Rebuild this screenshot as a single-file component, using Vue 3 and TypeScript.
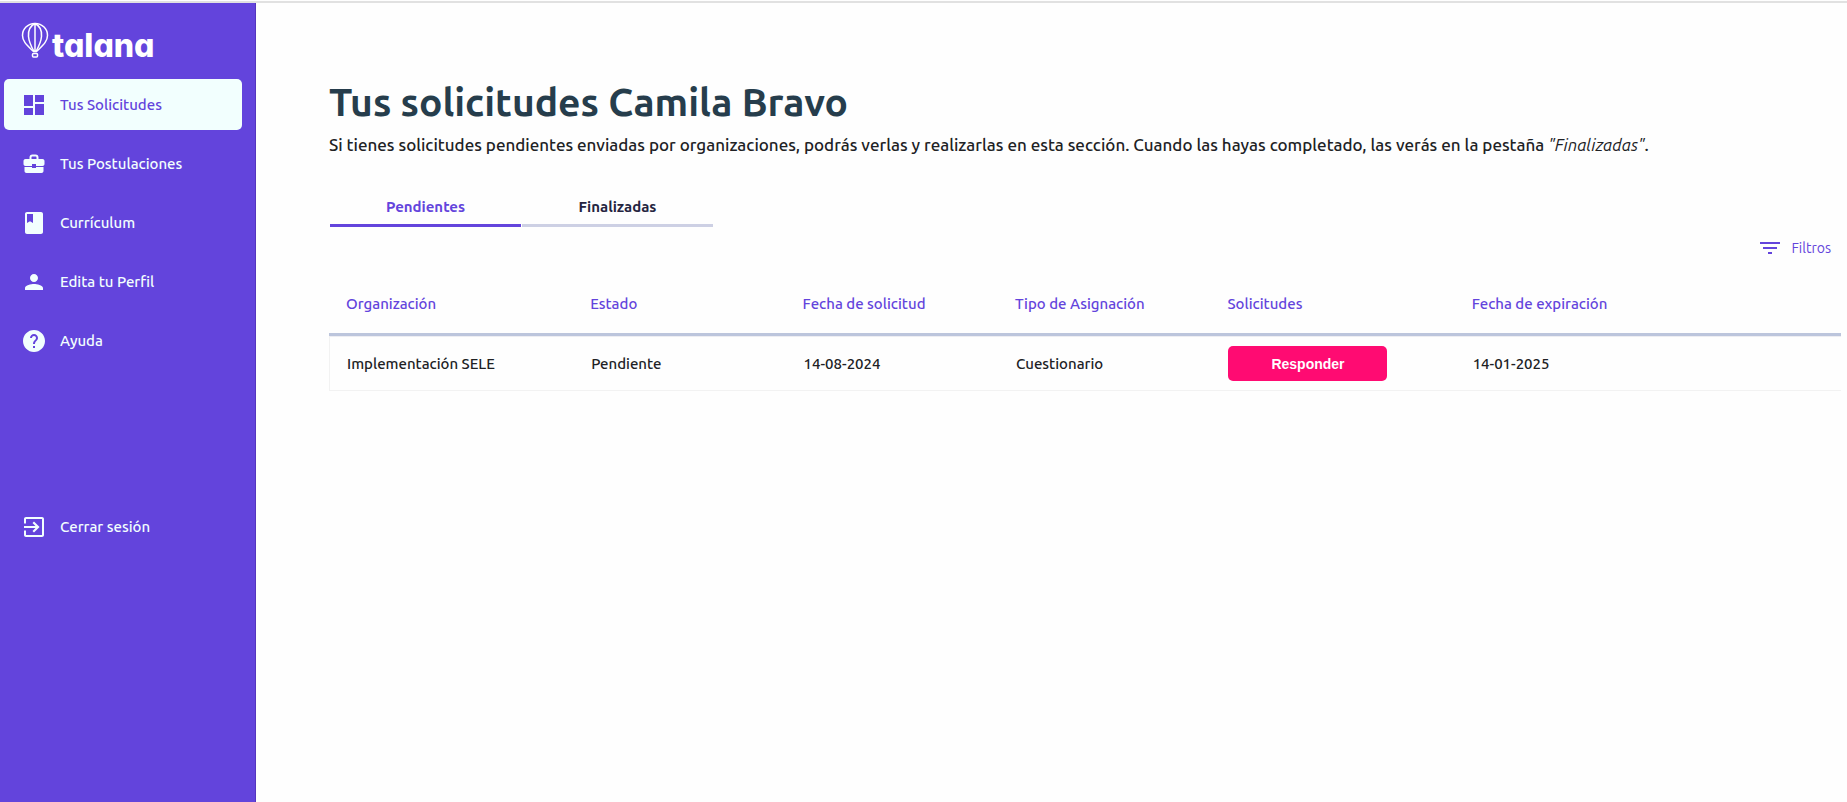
<script setup lang="ts">
import { ref } from 'vue'

const menu = [
  { label: 'Tus Solicitudes', icon: 'M2 13h9V2H2v11zm0 9h9v-7H2v7zm11 0h9V11h-9v11zm0-20v7h9V2h-9z' },
  { label: 'Tus Postulaciones', icon: 'M10 16v-1H2.500v4c0 1.110.890 2 2 2h15c1.110 0 2-.890 2-2v-4H14v1h-4zm10.500-9H16.500V5.500C16.500 3.500 15.500 2.500 13.500 2.500h-3C8.500 2.500 7.500 3.500 7.500 5.500V7h-4c-1.100 0-2 .9-2 2v3c0 1.110.890 2 2 2H10v-2h4v2h6.500c1.100 0 2-.9 2-2V9c0-1.100-.9-2-2-2zm-6 0h-5V5.500c0-.7.300-1 1-1h3c.7 0 1 .3 1 1V7z' },
  { label: 'Currículum', icon: 'M19 1H5c-1.100 0-2 .9-2 2v18c0 1.100.9 2 2 2h14c1.100 0 2-.9 2-2V3c0-1.100-.9-2-2-2zM5 3h6v9l-3-1.800L5 12V3z' },
  { label: 'Edita tu Perfil', icon: 'M12 12c2.210 0 4-1.790 4-4s-1.790-4-4-4-4 1.790-4 4 1.790 4 4 4zm0 2c-2.670 0-9 1.340-9 4v2h18v-2c0-2.660-6.330-4-9-4z' },
  { label: 'Ayuda', icon: 'M12 1C5.930 1 1 5.930 1 12s4.930 11 11 11 11-4.930 11-11S18.070 1 12 1zm1 18h-2v-2h2v2zm2.070-7.750l-.9.920C13.450 12.900 13 13.500 13 15h-2v-.5c0-1.100.450-2.100 1.170-2.830l1.240-1.260c.370-.360.590-.860.590-1.410 0-1.100-.9-2-2-2s-2 .9-2 2H8c0-2.210 1.790-4 4-4s4 1.790 4 4c0 .880-.360 1.680-.930 2.250z' },
]
const logout = 'M10.500 16.100L12 17.600l5.600-5.600L12 6.400l-1.500 1.500 3 3H2v2.100h11.500l-3 3.100zM20 2H4c-1.110 0-2 .9-2 2v4.500h2V4h16v16H4v-4.500H2V20c0 1.100.890 2 2 2h16c1.100 0 2-.9 2-2V4c0-1.100-.9-2-2-2z'

const tabs = ['Pendientes', 'Finalizadas']
const activeTab = ref('Pendientes')

const columns = ['Organización', 'Estado', 'Fecha de solicitud', 'Tipo de Asignación', 'Solicitudes', 'Fecha de expiración']
const requests = [
  { org: 'Implementación SELE', status: 'Pendiente', requested: '14-08-2024', kind: 'Cuestionario', expires: '14-01-2025' },
]
</script>

<template>
  <div class="page">
    <nav class="sidebar" aria-label="Principal">
      <a href="#" class="brand" aria-label="talana">
        <svg class="balloon" viewBox="0 0 28 36" aria-hidden="true">
          <g fill="none" stroke="#fff" stroke-width="1.500">
            <path d="M14 1.500C6.500 1.500 1.500 7 1.500 13.500C1.500 20 7 24 12.500 29.500h3C21 24 26.500 20 26.500 13.500C26.500 7 21.500 1.500 14 1.500z" />
            <path d="M14 1.500C9 4 7 9 7.500 14.500C8 20 10.500 25 13 29.500M14 1.500C19 4 21 9 20.500 14.500C20 20 17.500 25 15 29.500M14 1.500V29" />
            <rect x="11.500" y="31.500" width="5" height="3.500" rx="1" />
          </g>
        </svg>
        <span class="wordmark">talana</span>
      </a>
      <ul class="menu">
        <li v-for="(item, i) in menu" :key="item.label">
          <a href="#" class="item" :class="{ active: i === 0 }">
            <svg viewBox="0 0 24 24" aria-hidden="true"><path :d="item.icon" /></svg>
            <span>{{ item.label }}</span>
          </a>
        </li>
      </ul>
      <button type="button" class="item logout">
        <svg viewBox="0 0 24 24" aria-hidden="true"><path :d="logout" /></svg>
        <span>Cerrar sesión</span>
      </button>
    </nav>

    <main class="content">
      <h1>Tus solicitudes Camila Bravo</h1>
      <p class="intro">
        Si tienes solicitudes pendientes enviadas por organizaciones, podrás verlas y realizarlas en esta sección. Cuando las hayas completado, las verás en la pestaña <em>"Finalizadas"</em>.
      </p>
      <div class="tabs" role="tablist">
        <button
          v-for="tab in tabs" :key="tab" type="button" role="tab" class="tab"
          :class="{ selected: tab === activeTab }" :aria-selected="tab === activeTab"
          @click="activeTab = tab"
        >{{ tab }}</button>
      </div>
      <div class="toolbar">
        <button type="button" class="filter">
          <svg viewBox="0 0 24 24" aria-hidden="true"><path d="M10 18h4v-2h-4v2zM2 6v2h20V6H2zm3 7h14v-2H5v2z" /></svg>
          <span>Filtros</span>
        </button>
      </div>
      <table class="requests">
        <colgroup>
          <col class="wide"><col class="mid"><col class="mid"><col class="mid"><col class="wide"><col>
        </colgroup>
        <thead>
          <tr><th v-for="c in columns" :key="c" scope="col">{{ c }}</th></tr>
        </thead>
        <tbody>
          <tr v-for="r in requests" :key="r.org">
            <td>{{ r.org }}</td>
            <td>{{ r.status }}</td>
            <td>{{ r.requested }}</td>
            <td>{{ r.kind }}</td>
            <td><button type="button" class="answer">Responder</button></td>
            <td>{{ r.expires }}</td>
          </tr>
        </tbody>
      </table>
    </main>
  </div>
</template>

<style>
body {
  margin: 0;
  background: #fefefe;
}
</style>

<style scoped>
.page {
  display: flex;
  min-height: calc(100vh - 1px);
  margin-top: 1px;
  box-sizing: border-box;
  border-top: 2px solid #e1e1e1;
  background: #fefefe;
  color: #202124;
  font: 500 15px/20px Ubuntu, "Noto Sans", sans-serif;
}
button {
  font: inherit;
  color: inherit;
  background: none;
  border: 0;
  padding: 0;
  cursor: pointer;
}
a {
  color: inherit;
  text-decoration: none;
}

.sidebar {
  flex: none;
  width: 256px;
  box-sizing: border-box;
  border-right: 1px solid #5535be;
  background: #6344dc;
  color: #f2fffe;
}
.brand {
  display: flex;
  align-items: flex-end;
  gap: 3px;
  height: 55px;
  padding: 0 21px;
  box-sizing: border-box;
  color: #fff;
}
.balloon {
  width: 28px;
  height: 36px;
}
.wordmark {
  font: 800 32px/24px Inter, sans-serif;
  font-feature-settings: "cv11";
}
.menu {
  list-style: none;
  margin: 21px 0 0;
  padding: 0;
  display: grid;
  gap: 8px;
}
.item {
  display: flex;
  align-items: center;
  gap: 14px;
  width: 238px;
  height: 51px;
  margin: 0 4px;
  padding: 0 18px;
  box-sizing: border-box;
  border-radius: 5px;
  text-align: left;
}
.item svg {
  width: 24px;
  height: 24px;
  fill: currentColor;
}
.item.active {
  background: #f2fffe;
  color: #6344dc;
}
.logout {
  margin-top: 135px;
}

.content {
  flex: 1;
  min-width: 0;
  padding: 75px 6px 0 73px;
}
h1 {
  margin: 0;
  font-size: 39px;
  line-height: 48px;
  font-weight: 700;
  color: #263d4c;
}
.intro {
  margin: 7px 0 0;
  font-size: 17px;
  line-height: 24px;
}
.intro em {
  font-weight: 400;
}

.tabs {
  display: flex;
  gap: 1px;
  margin-top: 34px;
  padding-left: 1px;
}
.tab {
  width: 191px;
  height: 36px;
  padding-bottom: 2px;
  border-bottom: 3px solid #cdd0e4;
  font-weight: 700;
  color: #24243f;
}
.tab.selected {
  border-color: #6344dc;
  color: #6344dc;
}

.toolbar {
  display: flex;
  justify-content: flex-end;
  padding: 6px 10px 0 0;
}
.filter {
  display: flex;
  align-items: center;
  gap: 10px;
  height: 30px;
  color: #6344dc;
  font-size: 14px;
  font-weight: 400;
}
.filter svg {
  width: 24px;
  height: 24px;
  fill: currentColor;
}

.requests {
  width: 100%;
  margin-top: 12px;
  border-collapse: separate;
  border-spacing: 0;
  table-layout: fixed;
}
.wide { width: 16.15%; }
.mid { width: 14.05%; }
th {
  height: 58px;
  padding: 0 17px;
  border-bottom: 3px solid #bcc5dc;
  text-align: left;
  font-weight: 500;
  color: #6344dc;
}
td {
  height: 53px;
  padding: 0 18px;
  border-top: 1px solid #ededf2;
  border-bottom: 1px solid #f2f2f2;
}
td:first-child {
  padding-left: 17px;
  border-left: 1px solid #f2f2f2;
}
.answer {
  display: block;
  width: 159px;
  height: 35px;
  border-radius: 5px;
  background: #ff0b72;
  color: #fff;
  font: 700 14px/20px "Liberation Sans", Arial, sans-serif;
}
</style>
